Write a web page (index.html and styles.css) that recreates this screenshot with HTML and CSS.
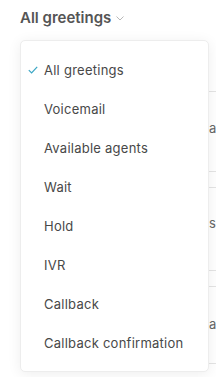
FILE: index.html
```html
<!DOCTYPE html>
<html lang="en">
<head>
    <meta charset="UTF-8">
    <meta name="viewport" content="width=device-width, initial-scale=1.0">
    <title>Greetings</title>
    <link rel="stylesheet" href="styles.css">
</head>
<body>
    <div class="page">
        <div class="header">
            <button class="filter-button">
                All greetings
                <svg class="chevron" width="8" height="5" viewBox="0 0 8 5"><path d="M0.5 0.5 L4 4 L7.5 0.5" fill="none" stroke="#b8b8b8" stroke-width="1"/></svg>
            </button>
        </div>

        <div class="table">
            <div class="row row-tall"><span class="cell">a</span></div>
            <div class="row row-gap"></div>
            <div class="row row-tall2"><span class="cell">s</span></div>
            <div class="row row-gap"></div>
            <div class="row row-tall3"><span class="cell">a</span></div>
            <div class="row row-end"></div>
        </div>

        <div class="dropdown">
            <div class="item selected"><span class="check">
                <svg width="10" height="8" viewBox="0 0 10 8"><path d="M0.8 4.2 L3.6 7 L9.2 0.8" fill="none" stroke="#3aa6c4" stroke-width="1.2"/></svg>
            </span>All greetings</div>
            <div class="item"><span class="check"></span>Voicemail</div>
            <div class="item"><span class="check"></span>Available agents</div>
            <div class="item"><span class="check"></span>Wait</div>
            <div class="item"><span class="check"></span>Hold</div>
            <div class="item"><span class="check"></span>IVR</div>
            <div class="item"><span class="check"></span>Callback</div>
            <div class="item"><span class="check"></span>Callback confirmation</div>
        </div>
    </div>
</body>
</html>
```

FILE: styles.css
```css
body {
    margin: 0;
    padding: 0;
    background-color: #ffffff;
    font-family: Inter, "Noto Sans", sans-serif;
    overflow: hidden;
}
.page {
    position: relative;
    width: 216px;
    height: 377px;
    overflow: hidden;
}
.header {
    height: 35px;
    padding-left: 20px;
    display: flex;
    align-items: center;
}
.filter-button {
    background: none;
    border: none;
    padding: 0;
    font-family: inherit;
    font-size: 15px;
    font-weight: 600;
    color: #555555;
    display: flex;
    align-items: center;
    gap: 5px;
    cursor: pointer;
}
.chevron {
    margin-top: 1px;
}
.table {
    margin-left: 150px;
    padding-top: 56px;
}
.row {
    border-top: 1px solid #e4e4e4;
    display: flex;
    align-items: center;
    box-sizing: border-box;
}
.row-tall {
    height: 80px;
    padding-bottom: 8px;
}
.row-gap {
    height: 16px;
}
.row-tall2 {
    height: 83px;
    padding-bottom: 12px;
}
.row-tall3 {
    height: 77px;
    padding-bottom: 2px;
}
.cell {
    padding-left: 59px;
    font-size: 13px;
    color: #666666;
    white-space: nowrap;
}
.dropdown {
    position: absolute;
    top: 40px;
    left: 20px;
    width: 189px;
    padding: 9px 0;
    background: #ffffff;
    border: 1px solid #ededed;
    border-radius: 5px;
    box-shadow: 0 2px 14px rgba(0, 0, 0, 0.07);
    box-sizing: border-box;
}
.item {
    height: 39px;
    display: flex;
    align-items: center;
    padding-left: 7px;
    font-size: 13px;
    letter-spacing: 0.25px;
    color: #484848;
    white-space: nowrap;
}
.check {
    width: 16px;
    display: flex;
    align-items: center;
}
```
